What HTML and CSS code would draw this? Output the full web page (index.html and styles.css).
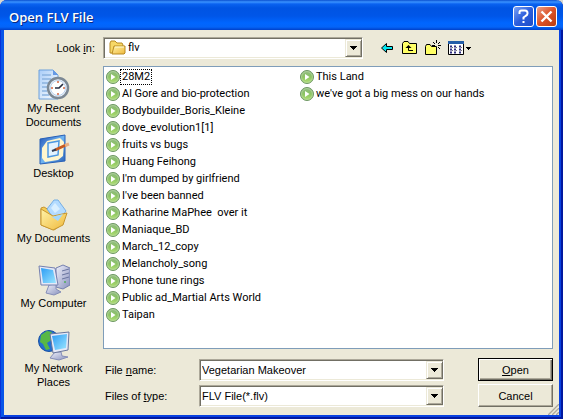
FILE: index.html
```html
<!DOCTYPE html>
<html lang="en">
<head>
<meta charset="utf-8">
<title>Open FLV File</title>
<link rel="stylesheet" href="styles.css">
</head>
<body>
<svg class="defs" aria-hidden="true">
  <defs>
    <linearGradient id="green" x1="0" y1="0" x2="0" y2="1"><stop offset="0" stop-color="#8fb886"/><stop offset=".5" stop-color="#8cc462"/><stop offset="1" stop-color="#b4e274"/></linearGradient>
    <linearGradient id="gold" x1="0" y1="0" x2="1" y2="1"><stop offset="0" stop-color="#fff3a8"/><stop offset="1" stop-color="#efb83a"/></linearGradient>
    <linearGradient id="screen" x1="0" y1="0" x2="1" y2="1"><stop offset="0" stop-color="#2d9cf4"/><stop offset="1" stop-color="#9be6ff"/></linearGradient>
    <linearGradient id="metal" x1="0" y1="0" x2="1" y2="1"><stop offset="0" stop-color="#f0f1fa"/><stop offset="1" stop-color="#8790bd"/></linearGradient>
    <linearGradient id="paper" x1="0" y1="0" x2="1" y2="1"><stop offset="0" stop-color="#a9cdf8"/><stop offset="1" stop-color="#ffffff"/></linearGradient>
    <linearGradient id="frame" x1="0" y1="0" x2="1" y2="1"><stop offset="0" stop-color="#2456b8"/><stop offset=".5" stop-color="#70b5f2"/><stop offset="1" stop-color="#2861b8"/></linearGradient>
  </defs>
  <symbol id="play" viewBox="0 0 14 14"><circle cx="7" cy="7" r="6.500" fill="url(#green)" stroke="#6d9664"/><circle cx="7" cy="7" r="5.400" fill="none" stroke="#b5d6a0" stroke-width=".8"/><path d="M5 4 9.500 7 5 10Z" fill="#fff"/></symbol>
  <symbol id="arrow" viewBox="0 0 7 4"><path d="M0 0H7V1H6V2H5V3H4V4H3V3H2V2H1V1H0Z"/></symbol>
</svg>
<main class="dialog">
  <header class="titlebar">
    <h1>Open FLV File</h1>
    <button class="caption help" aria-label="Help"><svg width="21" height="21" viewBox="0 0 21 21"><path d="M6.500 8V6.500Q6.500 4.500 8.500 4.500H12Q14.500 4.500 14.500 7V7.500Q14.500 9 12.500 10L10.500 11.500V13.500M10.500 15V17" fill="none" stroke="#fff" stroke-width="2"/></svg></button>
    <button class="caption close" aria-label="Close"><svg width="21" height="21" viewBox="0 0 21 21"><path d="M5.500 5.500 15.500 15.500M15.500 5.500 5.500 15.500" stroke="#fff" stroke-width="2.400"/></svg></button>
  </header>
  <div class="content">
    <div class="toolbar">
      <label for="folder">Look <u>i</u>n:</label>
      <div class="combo folder">
        <svg width="17" height="16" viewBox="0 0 17 16"><path d="M1 13V3L2 1H6L8 3H13L14 5V13Z" fill="#f7d867" stroke="#b98b23"/><path d="M3 14 5 6H16V13L15 14Z" fill="url(#gold)" stroke="#b98b23"/><path d="M6 7H15" stroke="#fffbd4"/></svg>
        <select id="folder"><option>flv</option></select>
        <span class="drop"><svg width="7" height="4"><use href="#arrow"/></svg></span>
      </div>
      <div class="tools">
        <button aria-label="Back"><svg width="16" height="16" viewBox="0 0 16 16"><path d="M1.500 8 6.500 3.500V6.500H12.500V9.500H6.500V12.500Z" fill="#00e8f0" stroke="#000"/></svg></button>
        <button aria-label="Up one level"><svg width="16" height="16" viewBox="0 0 16 16"><path d="M.5 13.500V3.500L2 1.500H6L7.500 3.500H14.500V13.500Z" fill="#ffff66" stroke="#000"/><path d="M6.500 6V10.500H11" fill="none" stroke="#000"/><path d="M3.500 8 6.500 5 9.500 8Z"/></svg></button>
        <button aria-label="Create new folder"><svg width="17" height="16" viewBox="0 0 17 16"><path d="M1.500 14.500V6.500L2.500 4.500H6L7.500 6.500H12.500V14.500Z" fill="#ffff66" stroke="#000"/><path d="M12.500 0V3M12.500 7V10M8 5.500H11M14 5.500H17M9 2 11 4M14 7 16 9M16 2 14 4" stroke="#000"/></svg></button>
        <button aria-label="View menu"><svg width="25" height="16" viewBox="0 0 25 16"><path d="M1.500 1.500H16.500V14.500H1.500Z" fill="#fff" stroke="#000"/><path d="M1 1H17V4H1Z" fill="#245ea8"/><path d="M3 6.500H5M7 6.500H9M12 6.500H14M3 9.500H5M7 9.500H9M12 9.500H14M3 12.500H5M7 12.500H9M12 12.500H14" stroke="#303080" stroke-width="2"/><path d="M5 7.500H6M9 7.500H10M14 7.500H15M5 10.500H6M9 10.500H10M14 10.500H15" stroke="#777"/><path d="M19 7H24V8H23V9H22V10H21V9H20V8H19Z"/></svg></button>
      </div>
    </div>
    <nav class="places" aria-label="Places">
      <button><svg width="32" height="32" viewBox="0 0 32 32"><path d="M1 1H15L20 6V30H1Z" fill="url(#paper)" stroke="#6ca0dc"/><path d="M15 1V6H20" fill="#6599e5"/><path d="M4 6H13M4 10H13M4 14H11M4 18H9M4 22H9M4 26H11" stroke="#8ab2df" stroke-width="1.500"/><circle cx="20" cy="19" r="10" fill="#edf4fc" stroke="#7c8894" stroke-width="2.500"/><circle cx="20" cy="19" r="7.500" fill="#fff" stroke="#bad1ed"/><path d="M17 19H21L25 15" fill="none" stroke="#252d42" stroke-width="1.700"/><path d="M20 12V14M20 24V26M13 19H15M25 19H27" stroke="#d6653f" stroke-width="1.500"/></svg><span>My Recent Documents</span></button>
      <button><svg width="32" height="32" viewBox="0 0 32 32"><path d="M2 5 27 1 27 27 2 30Z" fill="url(#frame)" stroke="#2861b8" stroke-linejoin="round"/><path d="M4 14 9 7 22 4 26 8 25 22 20 26 7 28 4 24Z" fill="#fff6ce"/><path d="M10 9 21 7 20 21 10 23Z" fill="#e2f3ff" stroke="#4d98e2" stroke-width="1.500"/><path d="M17 16 28 11" stroke="#c65a20" stroke-width="3"/><path d="M14 17 18 15.500" stroke="#343d51" stroke-width="2"/><path d="M27 11.500 31 10" stroke="#e6ae82" stroke-width="3"/></svg><span>Desktop</span></button>
      <button><svg width="32" height="32" viewBox="0 0 32 32"><path d="M3 9 6 8 11 11 22 15V27L16 31 3 26Z" fill="#f5ce58" stroke="#c69630"/><path d="M9 10 16 1 20 1 28 12 19 24Z" fill="#b3dbff" stroke="#75aee4"/><path d="M13 9 17 4 22 10 17 14Z" fill="#d9efff"/><path d="M3 10 15 17 29 14 25 26 15 31 3 26Z" fill="url(#gold)" stroke="#c69630" stroke-linejoin="round"/><path d="M14 18 25 15 20 22Z" fill="#a5d8fc"/></svg><span>My Documents</span></button>
      <button><svg width="32" height="32" viewBox="0 0 32 32"><path d="M18 4 25 1 32 4V21L25 25 18 23Z" fill="url(#metal)" stroke="#7580af"/><path d="M24 7 31 5M24 11 31 9M24 15 31 13" stroke="#69749f"/><circle cx="27" cy="18" r="1" fill="#4eae5b"/><path d="M11 21 18 20 18 25 23 28 16 31 8 29Z" fill="url(#metal)" stroke="#858eb8"/><path d="M1 2 17 4 20 21 3 21Z" fill="#e6e9f7" stroke="#7580af"/><path d="M3 4 15 6 18 19 5 19Z" fill="url(#screen)"/></svg><span>My Computer</span></button>
      <button><svg width="32" height="32" viewBox="0 0 32 32"><circle cx="11" cy="12" r="10.500" fill="#226fd0" stroke="#1850a3"/><path d="M3 6 9 2 14 3 12 7 15 10 9 14 12 20 8 21 5 15 2 13Z" fill="#58b846"/><path d="M17 23H23L24 27 30 28 21 31 12 29Z" fill="url(#metal)" stroke="#858eb8"/><path d="M12 5 31 3 30 21 15 24Z" fill="#e6e9f7" stroke="#69769b"/><path d="M14 7 29 5 28 19 17 21Z" fill="url(#screen)"/></svg><span>My Network Places</span></button>
    </nav>
    <ul class="files">
      <li><svg><use href="#play"/></svg><a class="focused" href="#">28M2</a></li>
      <li><svg><use href="#play"/></svg><a href="#">Al Gore and bio-protection</a></li>
      <li><svg><use href="#play"/></svg><a href="#">Bodybuilder_Boris_Kleine</a></li>
      <li><svg><use href="#play"/></svg><a href="#">dove_evolution1[1]</a></li>
      <li><svg><use href="#play"/></svg><a href="#">fruits vs bugs</a></li>
      <li><svg><use href="#play"/></svg><a href="#">Huang Feihong</a></li>
      <li><svg><use href="#play"/></svg><a href="#">I'm dumped by girlfriend</a></li>
      <li><svg><use href="#play"/></svg><a href="#">I've been banned</a></li>
      <li><svg><use href="#play"/></svg><a href="#">Katharine MaPhee  over it</a></li>
      <li><svg><use href="#play"/></svg><a href="#">Maniaque_BD</a></li>
      <li><svg><use href="#play"/></svg><a href="#">March_12_copy</a></li>
      <li><svg><use href="#play"/></svg><a href="#">Melancholy_song</a></li>
      <li><svg><use href="#play"/></svg><a href="#">Phone tune rings</a></li>
      <li><svg><use href="#play"/></svg><a href="#">Public ad_Martial Arts World</a></li>
      <li><svg><use href="#play"/></svg><a href="#">Taipan</a></li>
      <li><svg><use href="#play"/></svg><a href="#">This Land</a></li>
      <li><svg><use href="#play"/></svg><a href="#">we've got a big mess on our hands</a></li>
    </ul>
    <form class="fields">
      <label for="name">File <u>n</u>ame:</label>
      <div class="combo"><input id="name" type="text" value="Vegetarian Makeover"><button class="drop" type="button" aria-label="Recent names"><svg width="7" height="4"><use href="#arrow"/></svg></button></div>
      <button class="push default" type="submit"><span><u>O</u>pen</span></button>
      <label for="type">Files of <u>t</u>ype:</label>
      <div class="combo"><select id="type"><option>FLV File(*.flv)</option></select><span class="drop"><svg width="7" height="4"><use href="#arrow"/></svg></span></div>
      <button class="push" type="button">Cancel</button>
    </form>
  </div>
  <svg class="grip" width="12" height="12" viewBox="0 0 12 12" aria-hidden="true"><path d="M0 12 12 0M4 12 12 4M8 12 12 8" stroke="#fff"/><path d="M1 12 12 1M5 12 12 5M9 12 12 9" stroke="#aca899" stroke-width="1.500"/></svg>
</main>
</body>
</html>
```
FILE: styles.css
```css
* { box-sizing: border-box; }
body {
  margin: 0;
  background: #d8d8d0;
  color: #000;
  font: 11px/14px "Liberation Sans", Arial, sans-serif;
}
button, input, select { font: inherit; color: inherit; }
button { padding: 0; border: 0; background: none; }
svg { display: block; flex: none; }
.defs { position: absolute; width: 0; height: 0; }

.dialog {
  display: flex;
  flex-direction: column;
  min-height: 100vh;
  padding: 0 4px 4px;
  border-radius: 7px 7px 0 0;
  background: #ece9d8;
  overflow: hidden;
  position: relative;
  box-shadow: inset 1px 0 #0831d9, inset -2px -2px #0018a0, inset 4px 0 #0855e8, inset -4px -4px #0841e0;
}

.titlebar {
  display: flex;
  align-items: center;
  gap: 2px;
  height: 30px;
  margin: 0 -4px;
  padding: 3px 6px 0 9px;
  background: linear-gradient(#0a50d0 0, #3a93ff 2px, #0a62f0 4px, #0054e3 8px, #0056e8 16px, #0066ff 23px, #0464f8 27px, #0040c8 30px);
}
.titlebar h1 {
  flex: 1;
  margin: 0;
  color: #fff;
  font: 600 13px/18px "Open Sans", sans-serif;
  text-shadow: 1px 1px #0a2a80;
}
.caption {
  width: 21px;
  height: 21px;
  border: 1px solid #fff;
  border-radius: 3px;
}
.caption svg { margin: -1px; }
.help { background: linear-gradient(135deg, #7ba2f4, #2c5edc 50%, #1c4cc8); }
.close { background: linear-gradient(135deg, #eaa088, #dc5228 50%, #b83c10); }

.content {
  flex: 1;
  display: grid;
  grid-template-columns: 99px 1fr;
  grid-template-rows: 36px 1fr auto;
  padding: 0 6px 8px 0;
}
.toolbar {
  grid-column: 1 / -1;
  display: flex;
  align-items: center;
}
.toolbar label { width: 99px; padding-right: 8px; text-align: right; }

.combo {
  display: flex;
  align-items: center;
  min-width: 0;
  height: 22px;
  border: 1px solid;
  border-color: #aca899 #fff #fff #aca899;
  background: #fff;
  box-shadow: inset 1px 1px #716f64, inset -1px -1px #ece9d8;
}
.combo input, .combo select {
  flex: 1;
  min-width: 0;
  height: 18px;
  padding: 0 2px;
  border: 0;
  outline: 0;
  background: transparent;
  appearance: none;
}
.drop {
  display: grid;
  place-items: center;
  flex: none;
  width: 17px;
  height: 18px;
  border: 1px solid;
  border-color: #ece9d8 #716f64 #716f64 #ece9d8;
  background: #ece9d8;
  box-shadow: inset 1px 1px #fff, inset -1px -1px #aca899;
  pointer-events: none;
}
.folder { flex: 1; max-width: 260px; padding-left: 5px; }
.combo.folder select, .files { font-family: Roboto, sans-serif; }
.tools {
  display: flex;
  gap: 6px;
  margin: 0 auto 0 17px;
}

.places {
  grid-row: 2 / 4;
  padding-top: 3px;
}
.places button {
  display: flex;
  flex-direction: column;
  align-items: center;
  width: 100%;
  height: 65px;
}
.places span { width: 82px; }

.files {
  display: grid;
  grid-auto-flow: column;
  grid-template-rows: repeat(15, 17px);
  grid-auto-columns: 194px;
  margin: 0;
  padding: 1px;
  border: 1px solid #7f9db9;
  background: #fff;
  list-style: none;
  overflow: hidden;
}
.files li { display: flex; align-items: center; padding-left: 1px; }
.files svg { width: 14px; height: 14px; }
.files a {
  padding: 0 1px;
  border: 1px solid transparent;
  color: inherit;
  text-decoration: none;
  white-space: pre;
}
.files .focused { border: 1px dotted #000; }

.fields {
  display: grid;
  grid-template-columns: 94px minmax(0, 1fr) 75px;
  align-items: center;
  row-gap: 3px;
  padding: 9px 0 0 2px;
}
.fields .combo { margin-right: 34px; }
.push {
  height: 23px;
  border: 1px solid;
  border-color: #fff #716f64 #716f64 #fff;
  background: #ece9d8;
  box-shadow: inset -1px -1px #aca899;
}
.default {
  border-color: #000;
  box-shadow: inset 1px 1px #fff, inset -1px -1px #716f64, inset -2px -2px #aca899;
}
.grip { position: absolute; right: 4px; bottom: 4px; }
```
